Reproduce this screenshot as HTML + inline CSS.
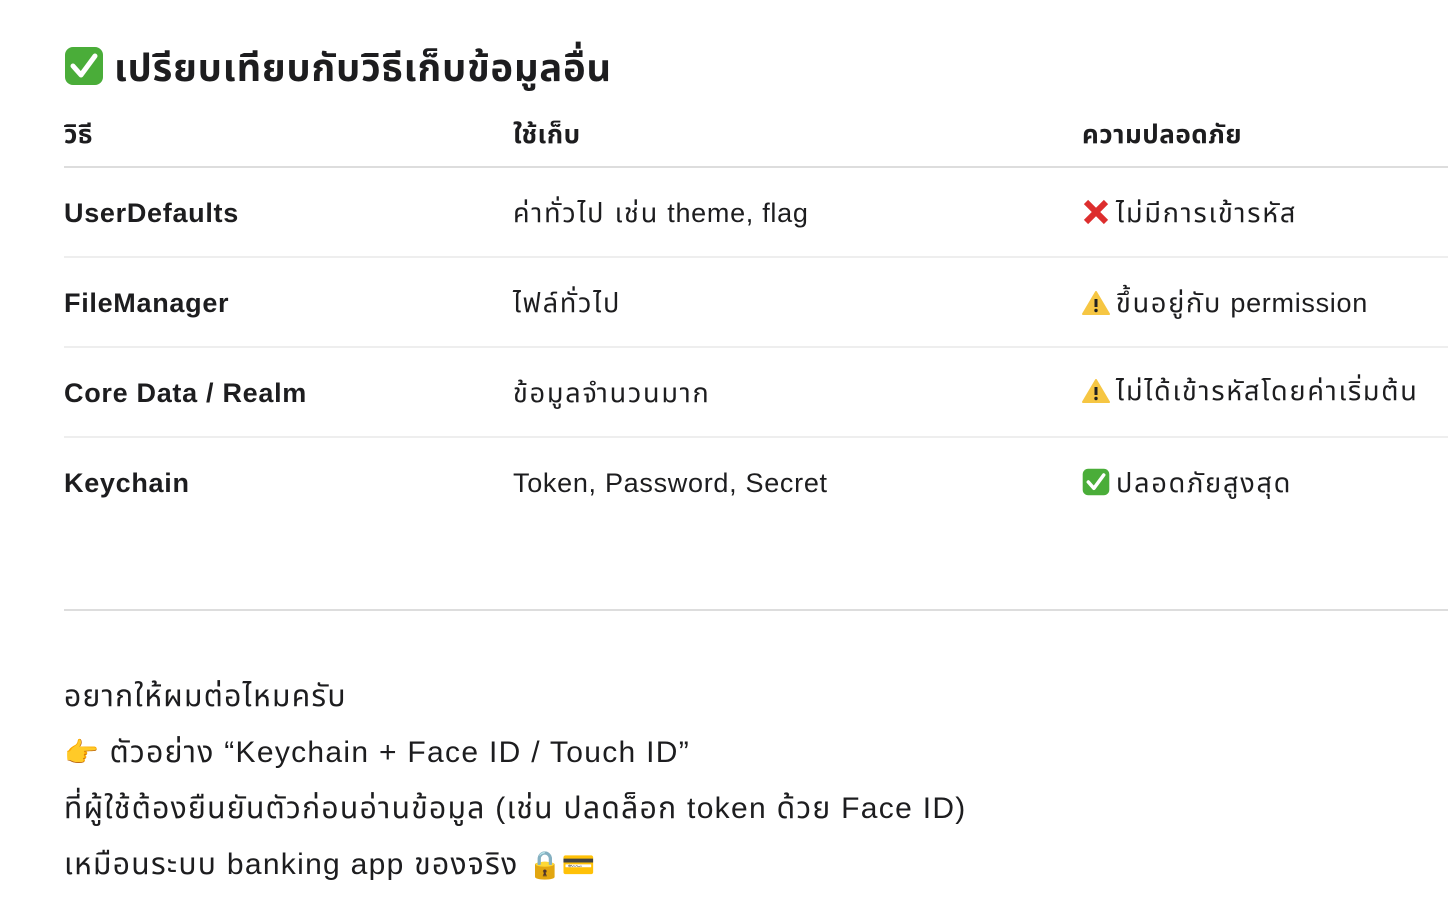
<!DOCTYPE html>
<html><head><meta charset="utf-8"><style>
body{margin:0;background:#fff;color:#1d1d1f;font-family:"Liberation Sans","Noto Sans Thai","Tlwg Typist",sans-serif;width:1448px;height:902px;overflow:hidden;position:relative}
.a{position:absolute;white-space:nowrap;line-height:1}
h1{position:absolute;left:64px;top:46px;margin:0;font-size:38px;font-weight:bold;line-height:44px;white-space:nowrap;letter-spacing:0.9px}
.th{font-size:26px;font-weight:bold;top:121px;letter-spacing:0.5px}
.cell{font-size:27px;letter-spacing:0.7px}
.t{letter-spacing:1.8px}
.b{font-weight:bold}
.ln{position:absolute;left:64px;right:0;height:2px;background:#eee}
.ic{display:inline-block;vertical-align:-4px;margin-right:8px}
p{position:absolute;left:64px;margin:0;font-size:30px;white-space:nowrap;line-height:56px;letter-spacing:1.3px}
</style></head><body>
<h1><svg class="ic" width="40" height="40" viewBox="0 0 40 40" style="vertical-align:-5px;margin-right:10px"><rect x="1" y="1" width="38" height="38" rx="8" fill="#4aad39"/><path d="M9 20l8 9 14-19" stroke="#fff" stroke-width="5" fill="none" stroke-linecap="round" stroke-linejoin="round"/></svg>เปรียบเทียบกับวิธีเก็บข้อมูลอื่น</h1>
<div class="a th" style="left:64px">วิธี</div>
<div class="a th" style="left:513px">ใช้เก็บ</div>
<div class="a th" style="left:1082px">ความปลอดภัย</div>
<div class="ln" style="top:166px;background:#ddd"></div>

<div class="a cell b" style="left:64px;top:200px">UserDefaults</div>
<div class="a cell" style="left:513px;top:200px"><span class="t">ค่าทั่วไป เช่น</span> theme, flag</div>
<div class="a cell t" style="left:1082px;top:198px"><svg class="ic" width="28" height="28" viewBox="0 0 28 28" style="margin-right:6px"><path d="M4 4L24 24M24 4L4 24" stroke="#dd2e2e" stroke-width="6"/></svg>ไม่มีการเข้ารหัส</div>
<div class="ln" style="top:256px"></div>

<div class="a cell b" style="left:64px;top:290px">FileManager</div>
<div class="a cell t" style="left:513px;top:290px">ไฟล์ทั่วไป</div>
<div class="a cell" style="left:1082px;top:290px"><svg class="ic" width="28" height="26" viewBox="0 0 28 26" style="margin-right:6px"><path d="M14 2L27 24H1Z" fill="#f6c643" stroke="#f6c643" stroke-linejoin="round" stroke-width="2"/><path d="M14 9v8" stroke="#222" stroke-width="3"/><circle cx="14" cy="20.5" r="1.7" fill="#222"/></svg><span class="t">ขึ้นอยู่กับ</span> permission</div>
<div class="ln" style="top:346px"></div>

<div class="a cell b" style="left:64px;top:380px">Core Data / Realm</div>
<div class="a cell t" style="left:513px;top:380px">ข้อมูลจำนวนมาก</div>
<div class="a cell t" style="left:1082px;top:378px"><svg class="ic" width="28" height="26" viewBox="0 0 28 26" style="margin-right:6px"><path d="M14 2L27 24H1Z" fill="#f6c643" stroke="#f6c643" stroke-linejoin="round" stroke-width="2"/><path d="M14 9v8" stroke="#222" stroke-width="3"/><circle cx="14" cy="20.5" r="1.7" fill="#222"/></svg>ไม่ได้เข้ารหัสโดยค่าเริ่มต้น</div>
<div class="ln" style="top:436px"></div>

<div class="a cell b" style="left:64px;top:470px">Keychain</div>
<div class="a cell" style="left:513px;top:470px">Token, Password, Secret</div>
<div class="a cell t" style="left:1082px;top:468px"><svg class="ic" width="28" height="28" viewBox="0 0 40 40" style="margin-right:6px"><rect x="1" y="1" width="38" height="38" rx="8" fill="#4aad39"/><path d="M9 20l8 9 14-19" stroke="#fff" stroke-width="5" fill="none" stroke-linecap="round" stroke-linejoin="round"/></svg>ปลอดภัยสูงสุด</div>

<div class="ln" style="top:609px;background:#ddd"></div>

<p style="top:669px">อยากให้ผมต่อไหมครับ</p>
<p style="top:725px"><span style="display:inline-block;width:36px;font-size:28px;letter-spacing:0">👉</span> ตัวอย่าง “Keychain + Face ID / Touch ID”</p>
<p style="top:781px">ที่ผู้ใช้ต้องยืนยันตัวก่อนอ่านข้อมูล (เช่น ปลดล็อก token ด้วย Face ID)</p>
<p style="top:837px">เหมือนระบบ banking app ของจริง <span style="font-size:27px;letter-spacing:0">🔒💳</span></p>
</body></html>
